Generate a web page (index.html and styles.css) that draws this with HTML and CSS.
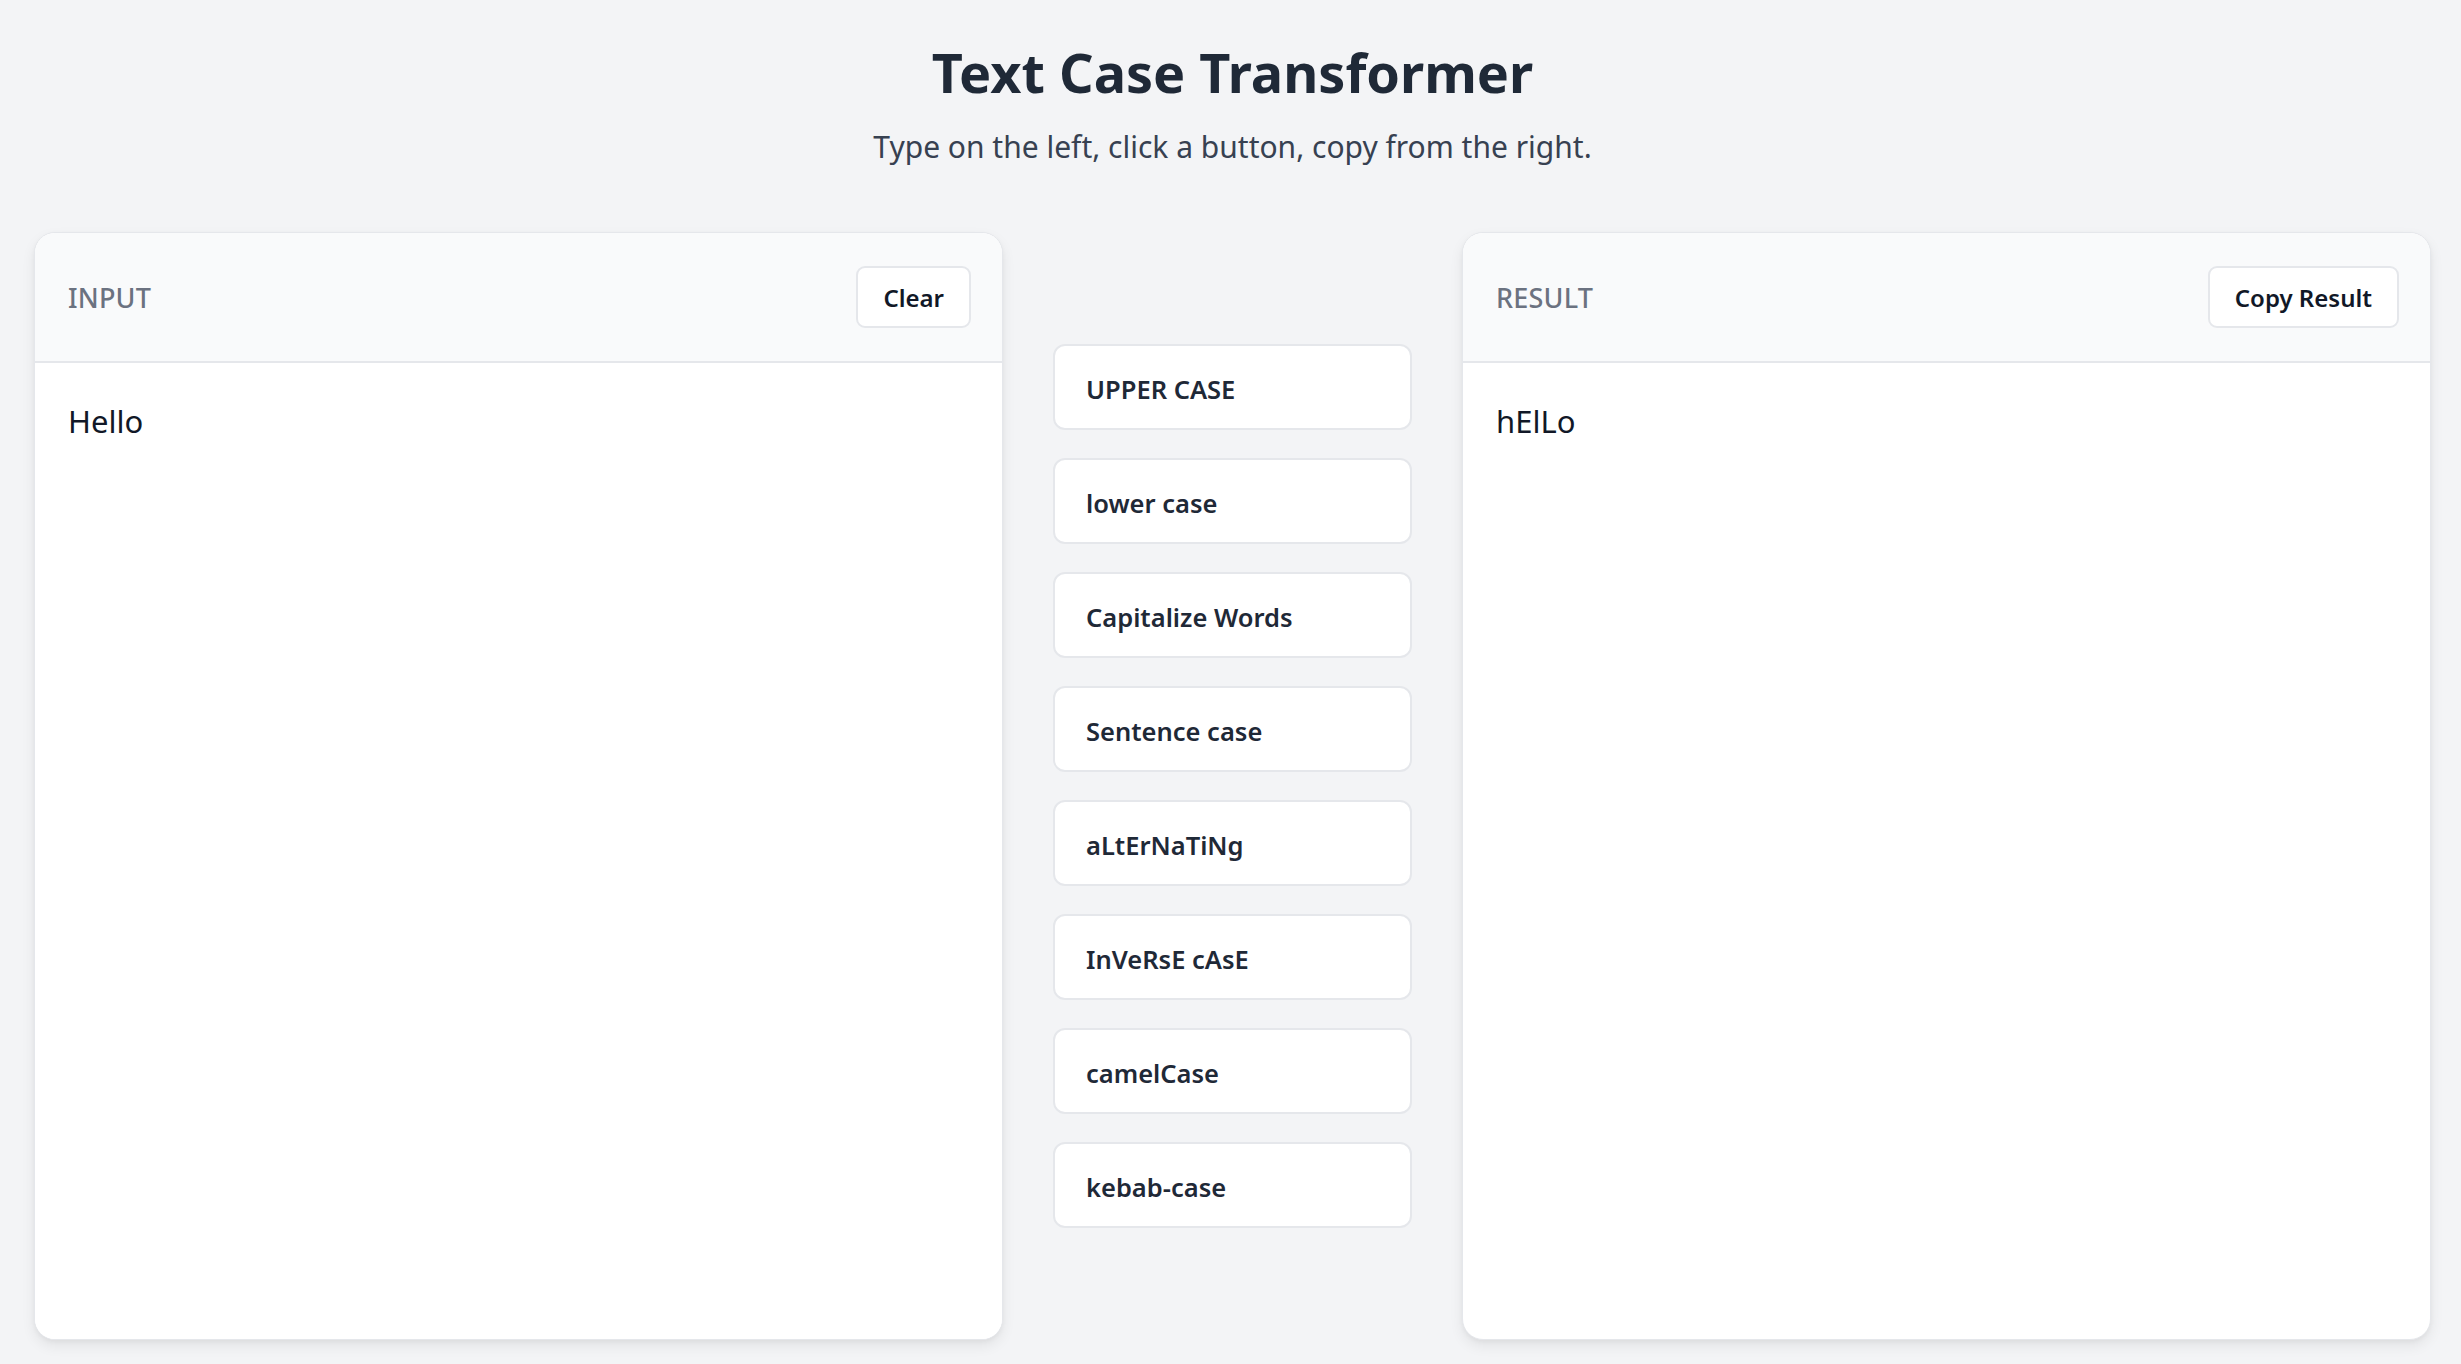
FILE: index.html
```html
<!DOCTYPE html>
<html lang="en">
<head>
<meta charset="utf-8">
<title>Text Case Transformer</title>
<link rel="stylesheet" href="styles.css">
</head>
<body>
<header class="page-header">
  <h1 class="title">Text Case Transformer</h1>
  <p class="subtitle">Type on the left, click a button, copy from the right.</p>
</header>
<main class="workspace">
  <section class="panel">
    <div class="panel-head">
      <span class="panel-label">INPUT</span>
      <button class="head-btn" type="button">Clear</button>
    </div>
    <textarea class="panel-body input-area" spellcheck="false">Hello</textarea>
  </section>
  <nav class="actions">
    <button class="action-btn" type="button">UPPER CASE</button>
    <button class="action-btn" type="button">lower case</button>
    <button class="action-btn" type="button">Capitalize Words</button>
    <button class="action-btn" type="button">Sentence case</button>
    <button class="action-btn" type="button">aLtErNaTiNg</button>
    <button class="action-btn" type="button">InVeRsE cAsE</button>
    <button class="action-btn" type="button">camelCase</button>
    <button class="action-btn" type="button">kebab-case</button>
  </nav>
  <section class="panel">
    <div class="panel-head">
      <span class="panel-label">RESULT</span>
      <button class="head-btn" type="button">Copy Result</button>
    </div>
    <div class="panel-body output-area">hElLo</div>
  </section>
</main>
</body>
</html>
```
FILE: styles.css
```css
* { box-sizing: border-box; }

html, body {
  margin: 0;
  padding: 0;
}

body {
  background: #f3f4f6;
  font-family: "Noto Sans", "Open Sans", sans-serif;
  color: #1f2937;
  padding: 38px 30px 24px 34px;
}

.page-header {
  text-align: center;
}

.title {
  margin: 0;
  font-size: 54px;
  line-height: 68px;
  font-weight: 700;
  color: #1f2937;
}

.subtitle {
  margin: 20px 0 0;
  font-size: 30px;
  line-height: 42px;
  color: #374151;
}

.workspace {
  margin-top: 64px;
  height: 1108px;
  display: grid;
  grid-template-columns: 1fr 359px 1fr;
  column-gap: 50px;
}

.panel {
  display: flex;
  flex-direction: column;
  background: #ffffff;
  border: 1px solid #e5e7eb;
  border-radius: 21px;
  overflow: hidden;
  box-shadow: 0 6px 14px rgba(0, 0, 0, 0.07), 0 2px 4px rgba(0, 0, 0, 0.04);
}

.panel-head {
  flex: 0 0 auto;
  height: 130px;
  display: flex;
  align-items: center;
  justify-content: space-between;
  padding: 0 31px 0 33px;
  background: #f9fafb;
  border-bottom: 2px solid #e5e7eb;
}

.panel-label {
  font-size: 27px;
  font-weight: 500;
  color: #6b7280;
  letter-spacing: 0.2px;
}

.head-btn {
  height: 62px;
  padding: 0 25px;
  background: #ffffff;
  border: 2px solid #e5e7eb;
  border-radius: 9px;
  font-family: inherit;
  font-size: 24px;
  font-weight: 600;
  color: #111827;
}

.panel-body {
  flex: 1 1 auto;
  padding: 35px 33px 32px;
  font-family: inherit;
  font-size: 31px;
  line-height: 1.5;
  color: #111827;
}

.input-area {
  width: 100%;
  border: none;
  outline: none;
  resize: none;
  background: #ffffff;
  margin: 0;
}

.actions {
  align-self: center;
  display: flex;
  flex-direction: column;
  gap: 28px;
}

.action-btn {
  height: 86px;
  text-align: left;
  padding: 4px 31px 0;
  background: #ffffff;
  border: 2px solid #e5e7eb;
  border-radius: 12px;
  font-family: inherit;
  font-size: 25.5px;
  font-weight: 600;
  color: #1f2937;
}
```
